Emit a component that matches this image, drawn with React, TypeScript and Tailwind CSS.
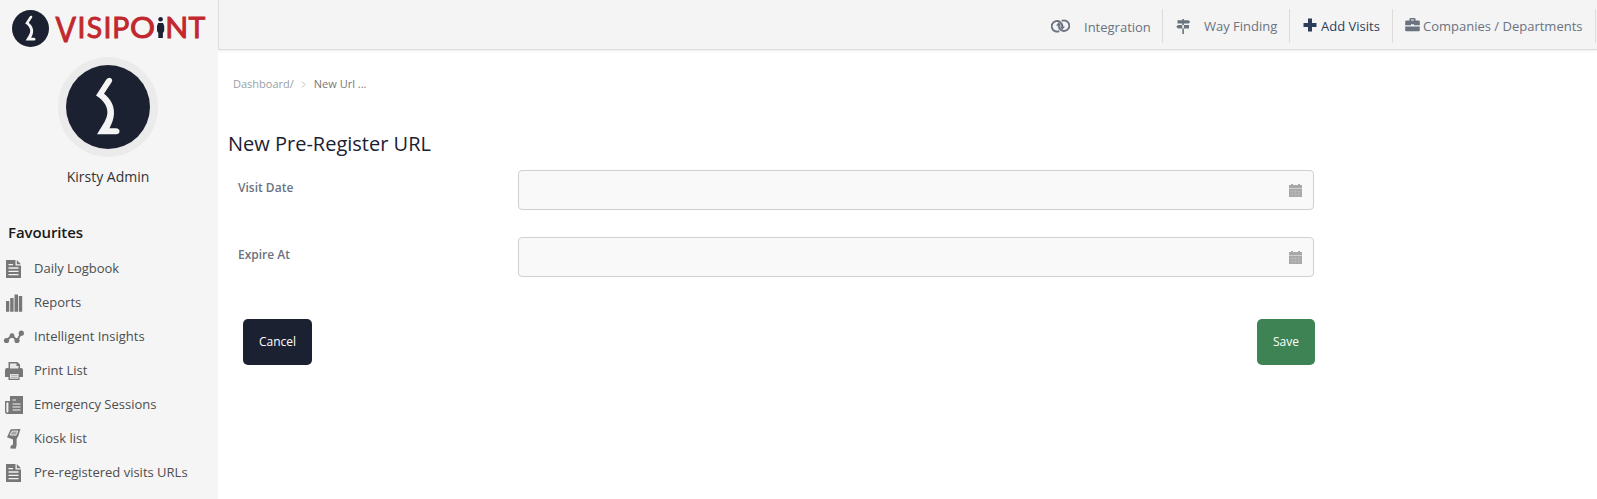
import type { ReactNode } from "react";

interface FieldProps {
  label: string;
}

function Mark({ className }: { className: string }) {
  return (
    <svg viewBox="8 8 84 84" className={className}>
      <circle cx="50" cy="50" r="42" fill="#1c2132" />
      <path
        d="M48.3 22.6 Q50.6 19.8 53 21.3 Q55.2 23 53.4 25.6 L46 36.8 C56.5 45 59.5 57 51.5 71.2 H58 Q61.5 71.5 61.5 74.3 Q61.5 77.3 58 77.3 H39 L46.5 65 C53 54 48 45 38 38.6 Z"
        fill="#f4f4f4"
      />
    </svg>
  );
}

function Logo() {
  return (
    <div className="flex h-[56px] pl-3 pt-[10px]">
      <Mark className="size-[37px] shrink-0" />
      <svg
        width="156"
        height="42"
        viewBox="0 -8 156 42"
        className="-mt-[5px] ml-[6px] overflow-visible font-['Lato']"
        fill="#c1272d"
        stroke="#c1272d"
        strokeWidth="0.9"
        fontSize="28.4"
      >
        <text x="0.6" y="29" fontSize="34" textLength="20.5" lengthAdjust="spacingAndGlyphs">V</text>
        <text x="22.6" y="24.7">I</text>
        <text x="31.7" y="24.7">S</text>
        <text x="48.6" y="24.7">I</text>
        <text x="57.2" y="24.7">P</text>
        <text x="75" y="24.7" textLength="25" lengthAdjust="spacingAndGlyphs">O</text>
        <text x="110.2" y="24.7" textLength="23" lengthAdjust="spacingAndGlyphs">N</text>
        <text x="133.6" y="24.7">T</text>
        <g fill="#1c2132" stroke="none">
          <circle cx="105.6" cy="6.2" r="2.3" />
          <path d="M103.2 10 h4.8 l1.2 3 v5 l-1.3 2 v5 h-4.6 v-5 l-1.3 -2 v-5 z" />
        </g>
      </svg>
    </div>
  );
}

const documentIcon = (
  <>
    <path d="M4 3 h9.5 v5.5 h5.5 v12.5 h-15 z M14.8 3 l4.2 4.2 h-4.2 z" />
    <path d="M6.5 11 h10 M6.5 14.3 h10 M6.5 17.6 h10 M6.5 7.7 h4.5" stroke="#f4f4f4" strokeWidth="1.3" />
  </>
);

const menu: { label: string; icon: ReactNode }[] = [
  { label: "Daily Logbook", icon: documentIcon },
  {
    label: "Reports",
    icon: <path d="M4 10 h3.3 v10.7 h-3.3 z M8.2 7 h3.4 v13.7 h-3.4 z M12.5 3.5 h3.5 v17.2 h-3.5 z M16.8 5 h3.4 v15.7 h-3.4 z" />,
  },
  {
    label: "Intelligent Insights",
    icon: (
      <>
        <path d="M4.5 15.5 L10 10.5 L15 15.5 L19.3 8.3" fill="none" stroke="#777" strokeWidth="2" />
        <circle cx="4.5" cy="15.5" r="2.6" />
        <circle cx="10" cy="10.7" r="2.4" />
        <circle cx="15" cy="15.5" r="2.6" />
        <circle cx="19.3" cy="8.2" r="2.6" />
      </>
    ),
  },
  {
    label: "Print List",
    icon: (
      <>
        <path d="M6.5 3 h9 l2.5 2.5 V9 h1 q2 0 2 2 v7 h-3.5 v3 h-11 v-3 H3 v-7 q0 -2 2 -2 h1.5 z" />
        <path d="M8 4.5 h6.5 v2.5 h2 v2.5 H8 z M8 15 h8.5 v4.7 H8 z" fill="#e8e8e8" />
        <path d="M9 16.3 h6.5 M9 18.3 h6.5" stroke="#aaa" strokeWidth="1" />
      </>
    ),
  },
  {
    label: "Emergency Sessions",
    icon: (
      <>
        <path d="M8 3 H21 V21 H5.5 q-2.5 0 -2.5 -2.5 V8 h5 z" />
        <path d="M4.4 9.5 v9 q0 1 1 1 t1 -1 v-9 z" fill="#f4f4f4" />
        <path d="M10.5 7 h3.5 M10.5 11 h8 M10.5 14 h8 M10.5 17 h8" stroke="#f4f4f4" strokeWidth="1.1" />
      </>
    ),
  },
  {
    label: "Kiosk list",
    icon: (
      <>
        <path d="M8.7 2.2 L18.5 2 L16.3 9 L14.6 12 V18.5 L13.6 21.7 L8.4 21.5 L8.6 19 L11 17.5 V12.5 L5 10.2 z" />
        <path d="M10 4.2 L15.8 4 L14 8.2 L8 8 z" fill="#a5a5a5" stroke="#f4f4f4" strokeWidth="0.8" />
      </>
    ),
  },
  { label: "Pre-registered visits URLs", icon: documentIcon },
];

function Sidebar() {
  return (
    <aside className="z-10 h-[499px] w-[218px] shrink-0 overflow-hidden bg-[#f5f5f5]">
      <Logo />
      <div className="ml-[58px] mt-px flex size-[100px] items-center justify-center rounded-full bg-[#ebebeb]">
        <Mark className="size-[84px]" />
      </div>
      <div className="mt-[9px] w-[216px] text-center text-[14px] leading-[22px] text-[#333]">
        Kirsty Admin
      </div>
      <h3 className="mt-[32px] pl-2 text-[15px] font-semibold leading-[24px] tracking-[-0.1px] text-[#1a1a1a]">
        Favourites
      </h3>
      <ul className="mt-[8px]">
        {menu.map((item) => (
          <li key={item.label} className="flex h-[34px] items-center pl-[2px] text-[13px] text-[#4d4d4d]">
            <svg width="24" height="24" fill="#777" className="mr-2 shrink-0">
              {item.icon}
            </svg>
            {item.label}
          </li>
        ))}
      </ul>
    </aside>
  );
}

function TopBar() {
  return (
    <nav className="flex h-[50px] justify-end border-b border-l border-[#dcdcdc] bg-[#f4f4f4] pr-px pt-[9px] text-[13px] leading-[34px] text-[#6b7280] shadow-[0_1px_2px_rgba(0,0,0,0.08)]">
      <div className="flex h-[34px] w-[112px] border-r border-[#dcdcdc]">
        <svg width="19" height="14" viewBox="0 0 19 14" className="mt-[10px]" fill="none" stroke="#6b7280" strokeWidth="1.9">
          <path d="M8.3 12.1 A5.3 5.3 0 1 1 11.3 7 V8.5" />
          <path d="M10.7 1.9 A5.3 5.3 0 1 1 7.7 7 V5.5" />
          <path d="M8.7 7.5 H14 L11.3 10.8 Z M5 6.5 H10.3 L7.7 3.2 Z" fill="#6b7280" stroke="none" />
        </svg>
        <span className="ml-[14px] mt-px">Integration</span>
      </div>
      <div className="flex h-[34px] w-[127px] border-r border-[#dcdcdc] pl-[13px]">
        <svg width="15" height="15" className="mt-[10px]" fill="#6b7280">
          <path d="M6.3 0 h1.6 v15 h-1.6 z M1.5 1.2 h11 l1.8 1.7 l-1.8 1.7 H1.5 z M13 6 H2 L0.2 7.7 L2 9.4 H13 z" />
        </svg>
        <span className="ml-[13px]">Way Finding</span>
      </div>
      <div className="flex h-[34px] w-[103px] border-r border-[#dcdcdc] pl-[13px] text-[#2c3e5a]">
        <svg width="14" height="14" className="mt-[9px]" fill="#2c3e5a">
          <path d="M5 0.5 h4 v4.5 h4.5 v4 h-4.5 v4.5 h-4 v-4.5 h-4.5 v-4 h4.5 z" />
        </svg>
        <span className="ml-1">Add Visits</span>
      </div>
      <div className="flex h-[34px] w-[203px] border-r border-[#dcdcdc] pl-[12px]">
        <svg width="15" height="14" className="mt-[9px]" fill="#6b7280">
          <path d="M4.5 2.5 V1 q0 -1 1 -1 h4 q1 0 1 1 V2.5 h3 q1.3 0 1.3 1.3 V7.3 H9 V6.3 H6 v1 H0.2 V3.8 q0 -1.3 1.3 -1.3 z M6 2.5 h3 v-1 h-3 z" />
          <path d="M0.2 8.5 h14.6 v3.7 q0 1 -1 1 h-12.6 q-1 0 -1 -1 z" />
        </svg>
        <span className="ml-[3px]">Companies / Departments</span>
      </div>
    </nav>
  );
}

function Field({ label }: FieldProps) {
  return (
    <div className="flex h-[67px]">
      <label className="w-[280px] pt-2 text-[12px] font-semibold leading-[20px] text-[#6b7280]">
        {label}
      </label>
      <div className="flex h-[40px] w-[796px] items-center justify-end rounded-[4px] border border-[#d0d0d0] bg-[#f9f9f9] pr-[11px]">
        <svg width="13" height="13" fill="#a8a8a8">
          <path d="M0 1 h2 v-1 h2 v1 h5 v-1 h2 v1 h2 v3 h-13 z M0 4.6 h13 v8.4 h-13 z" />
          <path d="M1 7.5 h11 M1 10.2 h11 M3.5 6 v6.5 M6.5 6 v6.5 M9.5 6 v6.5" stroke="#c4c4c4" strokeWidth="0.4" />
        </svg>
      </div>
    </div>
  );
}

export default function App() {
  return (
    <div className="flex h-[499px] w-full overflow-hidden bg-white font-['Open_Sans',sans-serif]">
      <Sidebar />
      <div className="min-w-0 flex-1">
        <TopBar />
        <main>
          <div className="flex items-center pl-[15px] pt-[24px] text-[11px] leading-[20px]">
            <span className="text-[#999fa8]">Dashboard/</span>
            <svg width="5" height="7" className="ml-[7px] mr-[8px]" fill="none" stroke="#bbb">
              <path d="M1 0.5 L4 3.5 L1 6.5" />
            </svg>
            <span className="text-[#777]">New Url ...</span>
          </div>
          <h1 className="mt-[35px] pl-[10px] text-[20px] leading-[30px] text-[#1c2132]">
            New Pre-Register URL
          </h1>
          <form className="mt-[11px] pl-[20px]">
            <Field label="Visit Date" />
            <Field label="Expire At" />
            <div className="mt-[15px] flex w-[1077px] justify-between pl-[5px] text-[12px] text-white">
              <button type="button" className="h-[46px] w-[69px] rounded-[5px] bg-[#1c2132]">
                Cancel
              </button>
              <button type="button" className="h-[46px] w-[58px] rounded-[5px] bg-[#3d8353]">
                Save
              </button>
            </div>
          </form>
        </main>
      </div>
    </div>
  );
}
